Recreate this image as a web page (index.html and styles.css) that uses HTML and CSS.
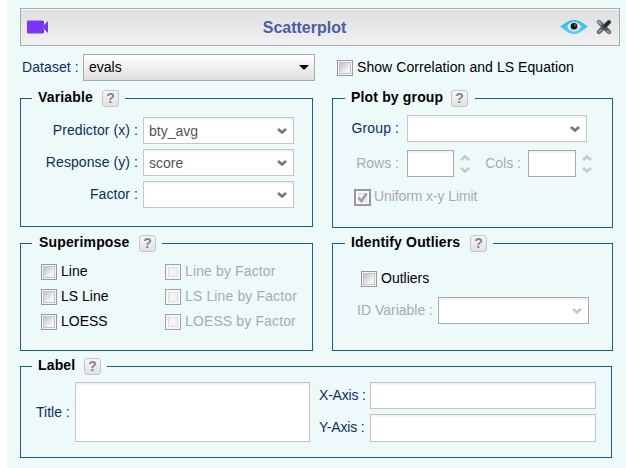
FILE: index.html
```html
<!DOCTYPE html>
<html lang="en">
<head>
<meta charset="utf-8">
<title>Scatterplot</title>
<link rel="stylesheet" href="styles.css">
</head>
<body>
<svg class="defs" aria-hidden="true">
  <symbol id="chevron" viewBox="0 0 10 8"><path d="M1 2 L5 5.500 L9 2" fill="none" stroke="currentColor" stroke-width="2.800"/></symbol>
</svg>
<main class="dialog">
  <header class="titlebar">
    <svg class="camera" viewBox="0 0 22 14"><rect x="0" y="0.500" width="16.500" height="13" rx="1" fill="#7a35fb"/><path d="M15 7 L21 1 V13 L15 7Z" fill="#7a35fb"/><path d="M16.500 1 V13" stroke="#62508a" stroke-width="1" stroke-dasharray="4 4"/></svg>
    <h1>Scatterplot</h1>
    <svg class="eye" viewBox="0 0 28 16">
      <defs><linearGradient id="sky" x2="0" y2="1"><stop offset="0" stop-color="#35b7ec"/><stop offset="1" stop-color="#54d1f8"/></linearGradient></defs>
      <path d="M0 7.500 C7 3 9 1 14 1 S21 3 28 7.500 C21 12.500 19 15 14 15 S7 12.500 0 7.500Z" fill="url(#sky)"/>
      <path d="M7 7.500 Q10 2.800 14 2.800 T21 7.500 Q18 12.500 14 12.500 T7 7.500Z" fill="#f8fdff"/>
      <circle cx="14" cy="7.300" r="4.500" fill="#c4ccd1"/><circle cx="14" cy="7.300" r="3.200" fill="#17191b"/><circle cx="15" cy="6.200" r="1" fill="#777"/>
    </svg>
    <svg class="close" viewBox="0 0 16 16">
      <defs><linearGradient id="steel" x2="1" y2="1"><stop offset="0" stop-color="#929aa3"/><stop offset=".45" stop-color="#3c4249"/><stop offset="1" stop-color="#6d747b"/></linearGradient></defs>
      <path d="M3 3 L13 13 M13 3 L3 13" stroke="#565d64" stroke-width="4.400" stroke-linecap="round"/>
      <path d="M3 3 L13 13" stroke="url(#steel)" stroke-width="3.400" stroke-linecap="round"/>
      <path d="M12.700 3.300 L9.500 6.500" stroke="#252a30" stroke-width="3" stroke-linecap="round"/>
      <path d="M2.600 2.900 L5 5.300 M3 12.900 L5.200 10.700 M11.500 12.500 L13 13" stroke="#9aa2aa" stroke-width="1.500" stroke-linecap="round"/>
    </svg>
  </header>

  <div class="dataset-row">
    <span class="label">Dataset :</span>
    <div class="combo combo-grey"><span>evals</span><i class="triangle"></i></div>
    <i class="check"></i><span class="option">Show Correlation and LS Equation</span>
  </div>

  <div class="panels">
    <fieldset class="variable">
      <legend><span>Variable</span><b class="help">?</b></legend>
      <div class="variable-grid">
        <span class="label">Predictor (x) :</span><div class="combo"><span>bty_avg</span><svg class="chevron"><use href="#chevron"/></svg></div>
        <span class="label">Response (y) :</span><div class="combo"><span>score</span><svg class="chevron"><use href="#chevron"/></svg></div>
        <span class="label">Factor :</span><div class="combo"><span></span><svg class="chevron"><use href="#chevron"/></svg></div>
      </div>
    </fieldset>

    <fieldset class="group">
      <legend><span>Plot by group</span><b class="help">?</b></legend>
      <div class="group-row"><span class="label">Group :</span><div class="combo"><span></span><svg class="chevron"><use href="#chevron"/></svg></div></div>
      <div class="size-row off">
        <span class="label">Rows :</span><div class="field"></div>
        <div class="spin"><svg class="chevron up"><use href="#chevron"/></svg><svg class="chevron"><use href="#chevron"/></svg></div>
        <span class="label cols">Cols :</span><div class="field wide"></div>
        <div class="spin"><svg class="chevron up"><use href="#chevron"/></svg><svg class="chevron"><use href="#chevron"/></svg></div>
      </div>
      <div class="limit-row off">
        <i class="check large"><svg viewBox="0 0 13 13"><path d="M2.500 6.500 L5.500 10 L10.500 2.500" fill="none" stroke="#9aa0ab" stroke-width="2.600"/></svg></i><span class="option">Uniform x-y Limit</span>
      </div>
    </fieldset>

    <fieldset class="superimpose">
      <legend><span>Superimpose</span><b class="help">?</b></legend>
      <div class="line-grid">
        <div class="choice"><i class="check"></i><span class="option">Line</span></div><div class="choice off"><i class="check"></i><span class="option">Line by Factor</span></div>
        <div class="choice"><i class="check"></i><span class="option">LS Line</span></div><div class="choice off"><i class="check"></i><span class="option">LS Line by Factor</span></div>
        <div class="choice"><i class="check"></i><span class="option">LOESS</span></div><div class="choice off"><i class="check"></i><span class="option">LOESS by Factor</span></div>
      </div>
    </fieldset>

    <fieldset class="outliers">
      <legend><span>Identify Outliers</span><b class="help">?</b></legend>
      <div class="choice"><i class="check"></i><span class="option">Outliers</span></div>
      <div class="id-row off"><span class="label">ID Variable :</span><div class="combo"><span></span><svg class="chevron"><use href="#chevron"/></svg></div></div>
    </fieldset>
  </div>

  <fieldset class="labels">
    <legend><span>Label</span><b class="help">?</b></legend>
    <div class="labels-row">
      <span class="label">Title :</span><div class="field title"></div>
      <div class="axes">
        <span class="label">X-Axis :</span><div class="field"></div>
        <span class="label">Y-Axis :</span><div class="field"></div>
      </div>
    </div>
  </fieldset>
</main>
</body>
</html>
```

FILE: styles.css
```css
* { box-sizing: border-box; }
body { margin: 0; background: #fff; font: 14px/16px "Liberation Sans", Arial, sans-serif; overflow: hidden; }
.defs { display: none; }
.dialog { margin-left: 7px; height: 468px; padding: 8px 6px 0 13px; background: #eefafa; }

.titlebar { display: flex; align-items: center; width: 600px; height: 38px; padding: 0 7px 0 6px; border: 1px solid #a9a9a9; background: linear-gradient(#dfdfdf, #f1f1f1); box-shadow: inset 0 1px #f8f8f8; }
.titlebar h1 { flex: 1; margin: 1px 0 0; text-align: center; font-size: 16px; line-height: 18px; color: #4a5da6; }
.camera { width: 22px; height: 14px; }
.eye { width: 28px; height: 16px; margin-right: 8px; }
.close { width: 16px; height: 16px; }

.label { color: #0d2c63; white-space: nowrap; }
.option { color: #000; white-space: nowrap; }
.off .label, .off .option { color: #aaa; }

.combo { display: flex; align-items: center; justify-content: space-between; height: 27px; padding: 1px 6px 0 5px; border: 1px solid #c5c5c5; background: #fff; box-shadow: inset 0 2px 2px #f2f2f2; color: #555; }
.combo .chevron { margin-bottom: 1px; }
.combo-grey { width: 232px; padding: 0 5px 1px; border-color: #a9a9a9; background: linear-gradient(#fff, #dfdfdf); box-shadow: none; color: #000; }
.triangle { border: 5px solid transparent; border-top-color: #000; border-bottom: 0; }
.chevron { width: 10px; height: 8px; color: #777; }
.off .chevron { color: #c8c8c8; }
.field { height: 27px; border: 1px solid #c5c5c5; background: #fff; box-shadow: inset 0 2px 2px #f2f2f2; }
.off .field, .off .combo { border-color: #aaa; }
.check { flex: none; display: block; width: 16px; height: 16px; border: 1px solid #999; background: linear-gradient(135deg, #bcc3cb, #f5f5f5 75%) content-box, #f4f4f4; padding: 2px; box-shadow: inset 0 0 0 1px #f4f4f4, inset 0 0 0 2px #c3c5c8; }
.off .check { border-color: #a2a2a2; background: #f3f3f3; box-shadow: inset 0 0 0 2px #f8f8f8, inset 0 0 0 3px #ddd; }
.off .large { width: 17px; height: 17px; border: 2px solid #999; padding: 0; }
.large svg { display: block; width: 13px; height: 13px; }

.dataset-row { display: flex; align-items: center; height: 27px; margin-top: 8px; padding-left: 2px; }
.dataset-row .label { width: 61px; letter-spacing: .08px; }
.dataset-row .label, .dataset-row .option { margin-bottom: 2px; }
.dataset-row .option { letter-spacing: .065px; }
.dataset-row .check { margin: 1px 4px 0 22px; }

fieldset { min-width: 0; margin: 0; padding: 0; border: 1px solid #165da5; }
legend { display: flex; align-items: flex-start; height: 17px; margin-left: 11px; padding: 0 6px; font-weight: bold; letter-spacing: .16px; }
legend span { margin-top: -1px; }
.help { width: 17px; height: 17px; margin-left: auto; border: 1px solid #c6c6c6; border-radius: 3px; background: linear-gradient(#f6f6f6, #e2e2e2); color: #858585; text-align: center; font-size: 14px; line-height: 15px; letter-spacing: 0; }

.panels { display: grid; grid-template-columns: 293px 281px; column-gap: 19px; grid-template-rows: 145px 116px; margin-top: 9px; }
.variable { height: 137px; }
.variable legend { width: 93px; }
.variable-grid { display: grid; grid-template-columns: 118px 151px; column-gap: 4px; row-gap: 5px; margin-top: 10px; }
.variable-grid .label { padding: 5px 1px 0 0; text-align: right; letter-spacing: .08px; }

.group { height: 138px; }
.group legend { width: 130px; margin-left: 12px; padding-right: 7px; }
.group-row { display: flex; gap: 4px; margin-top: 8px; }
.group-row .label { width: 70px; padding: 5px 4px 0 0; text-align: right; letter-spacing: .1px; }
.group-row .combo { width: 180px; }
.size-row { display: flex; align-items: center; margin-top: 8px; }
.size-row .label { width: 74px; margin-bottom: 1px; padding-right: 8px; text-align: right; }
.size-row .cols { width: 58px; padding-right: 7px; }
.size-row .field { width: 47px; }
.size-row .wide { width: 48px; }
.spin { display: flex; flex-direction: column; gap: 4px; width: 10px; margin: 1px 0 0 6px; }
.up { transform: scaleY(-1); }
.limit-row { display: flex; gap: 3px; margin: 12px 0 0 21px; }
.limit-row .option { margin-top: -1px; letter-spacing: -.1px; }

.superimpose, .outliers { height: 116px; }
.superimpose legend { width: 130px; padding-left: 7px; }
.line-grid { display: grid; grid-template-columns: 124px 1fr; row-gap: 9px; margin: 12px 0 0 20px; }
.choice { display: flex; gap: 4px; height: 16px; }
.choice .option { margin-top: -1px; }
.line-grid .off .option { letter-spacing: .13px; }
.outliers legend { width: 148px; margin-left: 12px; }
.outliers .choice { margin: 19px 0 0 28px; }
.id-row { display: flex; margin-top: 10px; }
.id-row .label { width: 105px; padding: 5px 5px 0 0; text-align: right; }
.id-row .combo { width: 151px; }

.labels { width: 592px; height: 100px; margin-top: 7px; }
.labels legend { width: 75px; }
.labels-row { display: flex; align-items: center; margin: 7px 0 0 15px; }
.labels-row > .label { width: 39px; margin-bottom: 1px; }
.title { width: 235px; height: 60px; }
.axes { display: grid; grid-template-columns: 51px 226px; grid-template-rows: 27px 28px; row-gap: 5px; margin-left: 9px; }
.axes .label { padding-top: 5px; letter-spacing: -.2px; }
.axes .field { height: auto; }
```
